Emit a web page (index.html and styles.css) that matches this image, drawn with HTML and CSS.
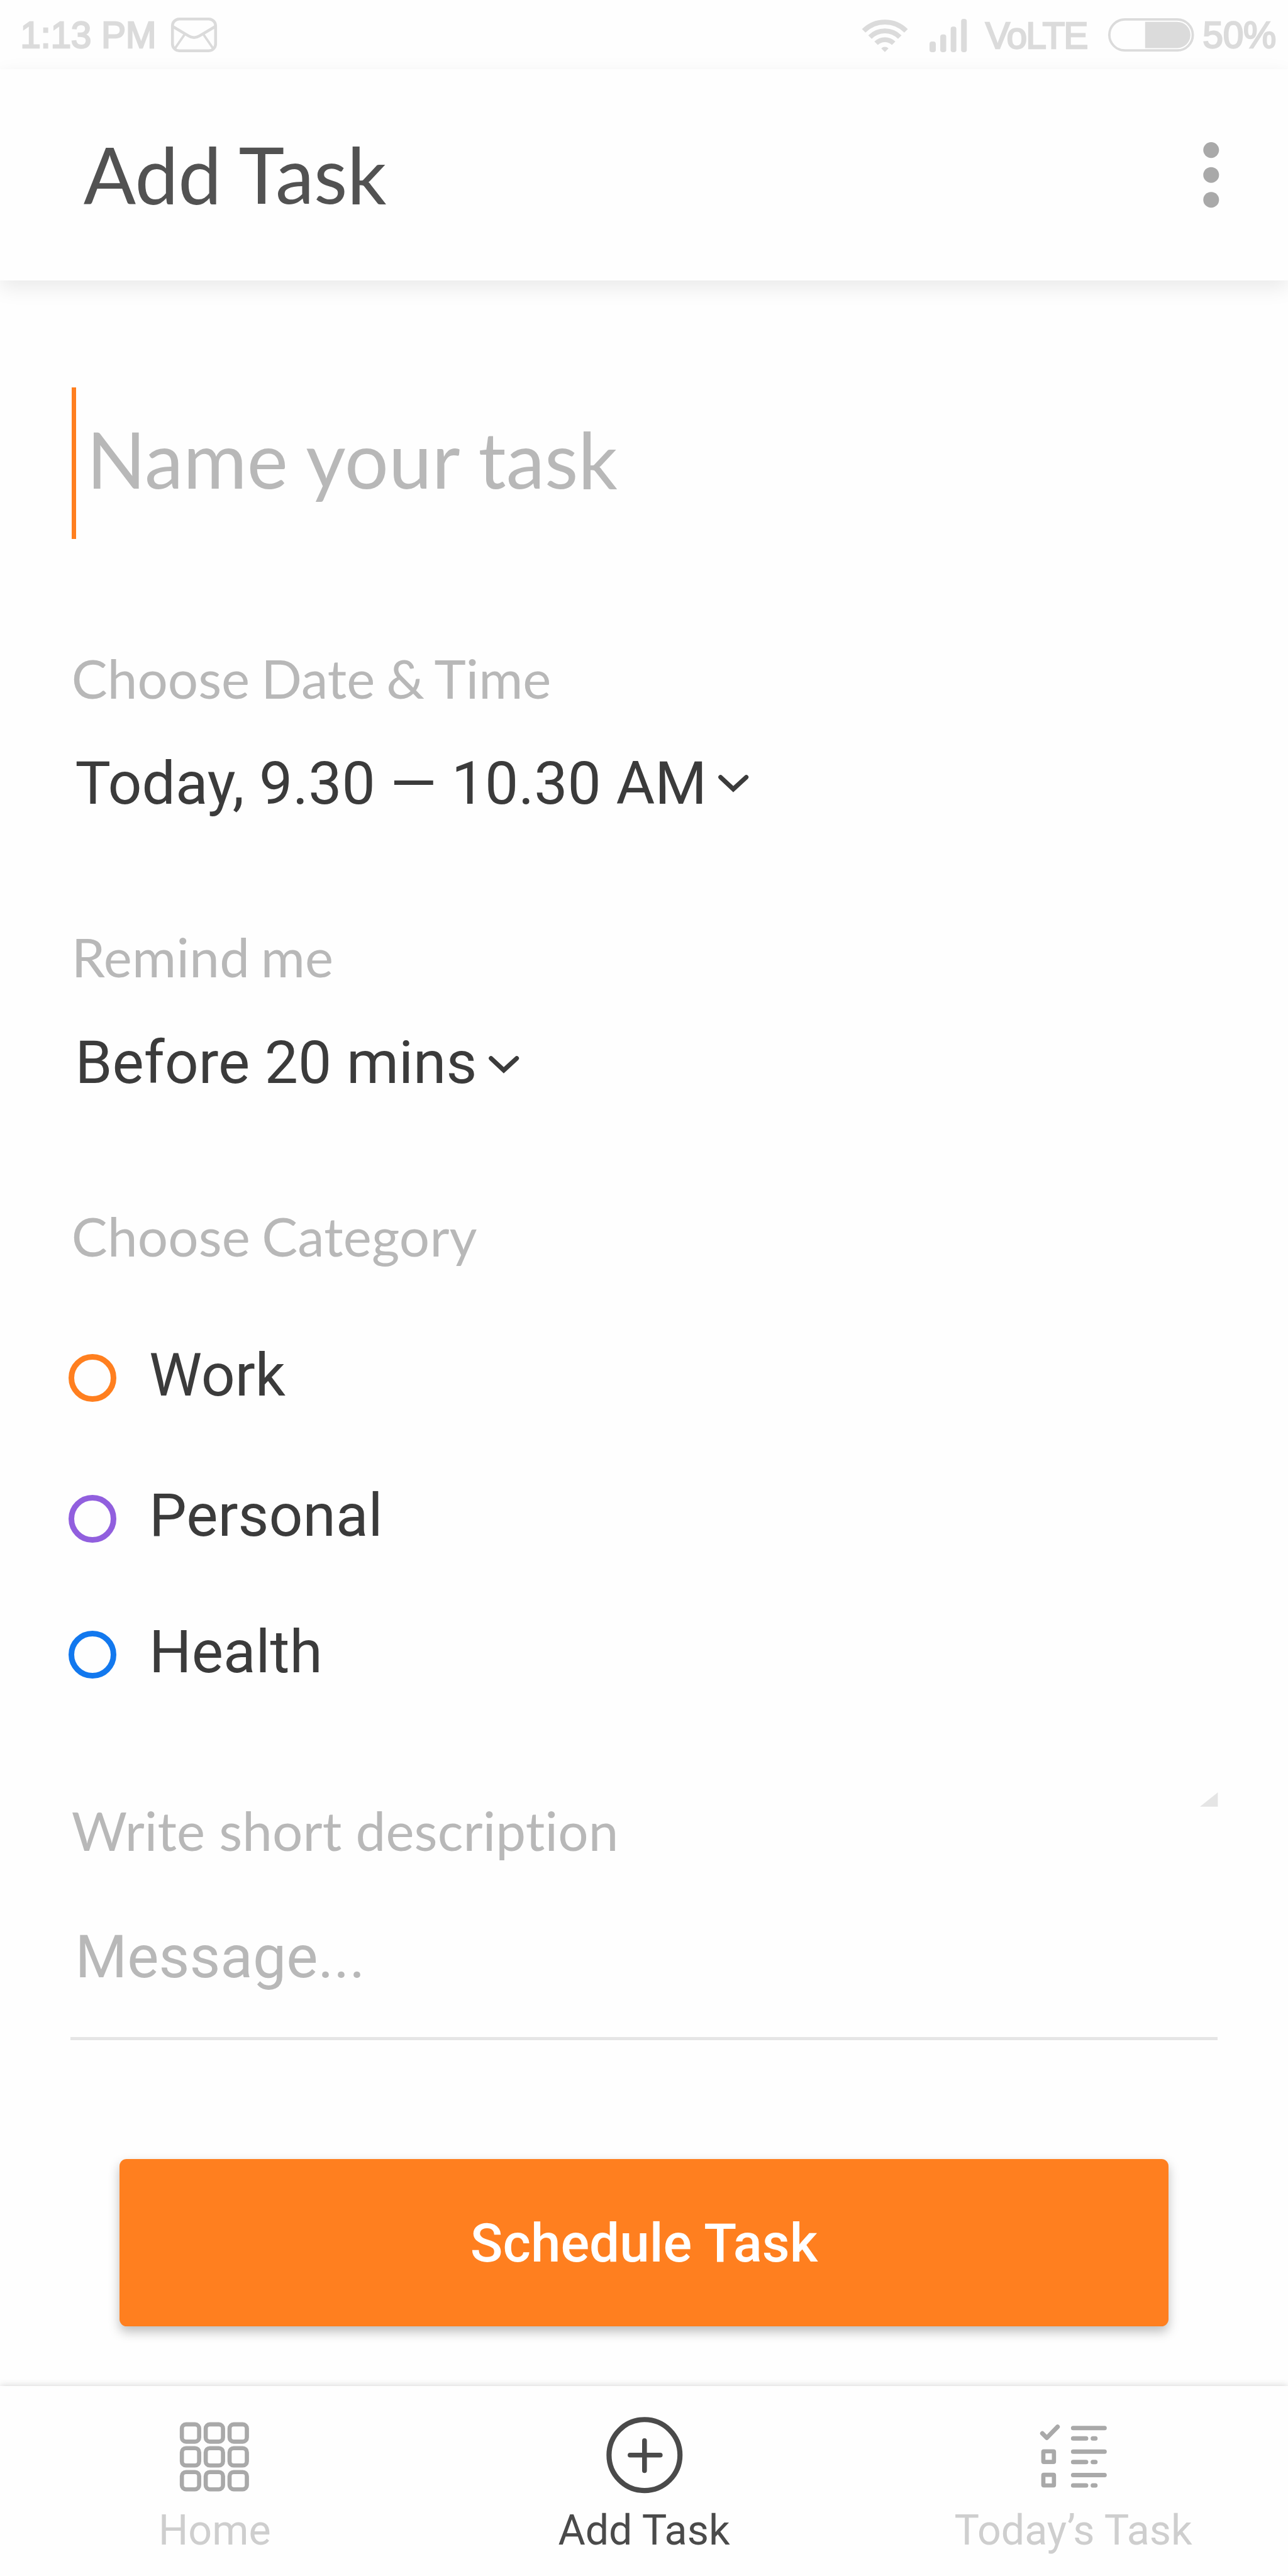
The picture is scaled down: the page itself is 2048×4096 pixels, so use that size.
FILE: index.html
```
<!DOCTYPE html>
<html lang="en">
<head>
<meta charset="utf-8">
<title>Add Task</title>
<link rel="stylesheet" href="styles.css">
</head>
<body>
<div class="screen">
  <div class="status">
    <div class="status-left">
      <span class="status-text clock">1:13 PM</span>
      <svg class="mail" viewBox="0 0 77 58" fill="none" stroke="currentColor">
        <rect x="2.3" y="2.4" width="72.4" height="53.2" rx="11.5" stroke-width="4.8"/>
        <path d="M3 15 29 30.5Q38.5 36.5 48 30.5L74 15" stroke-width="4.8"/>
        <path d="M22.5 28.5 6 52.5M54.5 28.5 71 52.5" stroke-width="4"/>
      </svg>
    </div>
    <div class="status-right">
      <svg class="wifi" viewBox="0 0 76 55" fill="none" stroke="currentColor" stroke-width="8.2">
        <path d="M2.5 19.1A50.2 50.2 0 0 1 73.5 19.1"/>
        <path d="M13 29.6A35.3 35.3 0 0 1 63 29.6"/>
        <path d="M23.3 39.9A20.8 20.8 0 0 1 52.7 39.9"/>
        <path d="M31.9 48.5A8.6 8.6 0 0 1 44.1 48.5L38 54.6Z" fill="currentColor" stroke="none"/>
      </svg>
      <svg class="signal" viewBox="0 0 63 56" fill="currentColor">
        <rect x="0" y="38" width="10.5" height="18" rx="4"/>
        <rect x="18" y="26" width="10" height="30" rx="4"/>
        <rect x="35.5" y="13" width="9.5" height="43" rx="4"/>
        <rect x="53" y="0" width="9.5" height="56" rx="4"/>
      </svg>
      <span class="status-text volte">VoLTE</span>
      <svg class="battery" viewBox="0 0 144 56">
        <rect x="2" y="2" width="140" height="52" rx="26" fill="none" stroke="currentColor" stroke-width="4"/>
        <path d="M62 6H116A22 22 0 0 1 116 50H62Z" fill="currentColor"/>
      </svg>
      <span class="status-text percent">50%</span>
    </div>
  </div>

  <header class="header">
    <h1 class="title">Add Task</h1>
    <svg class="more" viewBox="0 0 27 110" fill="currentColor">
      <circle cx="13.5" cy="13.3" r="13.2"/><circle cx="13.5" cy="55" r="13.2"/><circle cx="13.5" cy="96.7" r="13.2"/>
    </svg>
  </header>

  <main class="form">
    <div class="name-field"><span class="name-text">Name your task</span></div>

    <section class="field field-date">
      <div class="label label-date">Choose Date &amp; Time</div>
      <div class="value">Today, 9.30 — 10.30 AM
        <svg class="chevron" viewBox="0 0 51 30" fill="none" stroke="currentColor" stroke-width="7.6" stroke-linecap="round"><path d="M4 4 25.3 24 47 4"/></svg>
      </div>
    </section>

    <section class="field">
      <div class="label label-remind">Remind me</div>
      <div class="value">Before 20 mins
        <svg class="chevron chevron-low" viewBox="0 0 51 30" fill="none" stroke="currentColor" stroke-width="7.6" stroke-linecap="round"><path d="M4 4 25.3 24 47 4"/></svg>
      </div>
    </section>

    <section class="categories">
      <div class="label label-category">Choose Category</div>
      <div class="category work"><span class="ring"></span><span class="category-name">Work</span></div>
      <div class="category personal"><span class="ring"></span><span class="category-name">Personal</span></div>
      <div class="category health"><span class="ring"></span><span class="category-name">Health</span></div>
    </section>

    <section class="description">
      <div class="label label-description">Write short description</div>
      <div class="message">Message...</div>
      <svg class="resizer" viewBox="0 0 30 24"><path d="M30 0V24H0Z" fill="#e5e5e5"/></svg>
    </section>

    <div class="submit">Schedule Task</div>
  </main>

  <nav class="tabs">
    <div class="tab">
      <svg class="tab-icon" viewBox="0 0 160 128" fill="none" stroke="currentColor" stroke-width="7">
        <rect x="25.5" y="12.5" width="29" height="29" rx="7"/><rect x="65.5" y="12.5" width="29" height="29" rx="7"/><rect x="105.5" y="12.5" width="29" height="29" rx="7"/>
        <rect x="25.5" y="52.5" width="29" height="29" rx="7"/><rect x="65.5" y="52.5" width="29" height="29" rx="7"/><rect x="105.5" y="52.5" width="29" height="29" rx="7"/>
        <rect x="25.5" y="92.5" width="29" height="29" rx="7"/><rect x="65.5" y="92.5" width="29" height="29" rx="7"/><rect x="105.5" y="92.5" width="29" height="29" rx="7"/>
      </svg>
      <span class="tab-label">Home</span>
    </div>
    <div class="tab active">
      <svg class="tab-icon" viewBox="0 0 160 128" fill="none" stroke="currentColor">
        <circle cx="81" cy="64" r="59.5" stroke-width="8.6"/>
        <path d="M56.8 64H107.4M81 39.8V90.2" stroke-width="8" stroke-linecap="round"/>
      </svg>
      <span class="tab-label">Add Task</span>
    </div>
    <div class="tab">
      <svg class="tab-icon" viewBox="0 0 160 128" fill="none" stroke="currentColor" stroke-width="7.4" stroke-linecap="round" stroke-linejoin="round">
        <path d="M27.8 27.6 35.3 35.2 53.4 16.6"/>
        <rect x="29.5" y="57.8" width="17.8" height="17.8" rx="0.8" stroke-width="7"/>
        <rect x="29.5" y="97.2" width="17.8" height="17.8" rx="0.8" stroke-width="7"/>
        <path d="M79.5 18.8H132.2M79.5 36.2H101.2M112.5 36.2H116.8"/>
        <path d="M79.5 58.2H132.2M79.5 75.6H101.2M112.5 75.6H116.8"/>
        <path d="M79.5 97.6H132.2M79.5 115H101.2M112.5 115H116.8"/>
      </svg>
      <span class="tab-label">Today’s Task</span>
    </div>
  </nav>
</div>
</body>
</html>
```
FILE: styles.css
```
/* 1rem is 100 design pixels on a 2160px wide artboard */
html { font-size: calc(100vw / 21.6); }
* { box-sizing: border-box; }
body { margin: 0; background: #fefefe; font-family: Roboto, sans-serif; color: #3b3b3b; }
svg { display: block; flex: none; overflow: visible; }
.screen { display: flex; flex-direction: column; width: 21.6rem; height: 43.2rem; overflow: hidden; }

.status { display: flex; justify-content: space-between; align-items: center; height: 1.16rem; padding: 0.01rem 0.2rem 0 0.34rem; color: #dbdbdb; }
.status-left, .status-right { display: flex; align-items: center; }
.status-text { font: 0.62rem/0.8rem "Liberation Sans", Arial, sans-serif; white-space: nowrap; -webkit-text-stroke: 0.024rem currentColor; }
.clock { letter-spacing: -0.004rem; }
.mail { width: 0.77rem; height: 0.58rem; margin-left: 0.25rem; }
.wifi { width: 0.76rem; height: 0.55rem; margin: 0.03rem 0.36rem 0 0; }
.signal { width: 0.63rem; height: 0.56rem; margin: 0.03rem 0.31rem 0 0; }
.volte { letter-spacing: -0.022rem; padding-top: 0.04rem; }
.battery { width: 1.44rem; height: 0.56rem; margin: 0 0.15rem 0 0.35rem; }
.percent { letter-spacing: -0.003rem; }

.header { position: relative; display: flex; justify-content: space-between; align-items: center; height: 3.54rem; padding: 0 1.155rem 0 1.4rem; background: #fefefe; box-shadow: 0 0.12rem 0.33rem rgba(0, 0, 0, 0.085); }
.title { margin: 0 0 0.026rem; font: 400 1.3rem/1.6rem Lato, sans-serif; letter-spacing: -0.003rem; color: #525252; }
.more { width: 0.27rem; height: 1.1rem; color: #a9a9a9; }

.form { flex: 1; display: flex; flex-direction: column; padding: 1.8rem 1.18rem 0; }
.name-field { display: flex; align-items: center; height: 2.54rem; margin-left: 0.02rem; padding: 0 0 0.146rem 0.18rem; border-left: 0.08rem solid #ff7f1f; }
.name-text { font: 1.3rem/1.6rem Lato, sans-serif; color: #b8b8b8; }
.label { margin-left: 0.02rem; font: 0.9rem/1.08rem Lato, sans-serif; font-variant-ligatures: none; color: #b8b8b8; }
.label-date { word-spacing: -0.04rem; }
.label-remind { letter-spacing: 0.003rem; word-spacing: -0.05rem; }
.label-category { letter-spacing: 0.0015rem; word-spacing: -0.04rem; }
.label-description { letter-spacing: 0.0015rem; }
.field { margin-top: 1.773rem; }
.field-date { margin-top: 1.787rem; }
.value { display: flex; align-items: center; gap: 0.195rem; height: 1.2rem; margin: 0.627rem 0 0 0.08rem; padding-top: 0.02rem; font-size: 1rem; line-height: 1.2rem; }
.chevron { width: 0.51rem; height: 0.3rem; }
.chevron-low { margin-top: 0.08rem; }

.categories { margin-top: 1.773rem; }
.category { display: flex; align-items: center; height: 0.8rem; margin-left: -0.03rem; }
.ring { width: 0.8rem; height: 0.8rem; border: 0.1rem solid; border-radius: 50%; }
.category-name { margin: 0 0 0.1rem 0.55rem; font-size: 1rem; line-height: 0.9rem; }
.work { margin-top: 1.443rem; }
.work .ring { border-color: #ff7f1f; }
.personal { margin-top: 1.56rem; }
.personal .ring { border-color: #915fde; }
.health { margin-top: 1.48rem; }
.health .ring { border-color: #1278ee; }

.description { position: relative; margin-top: 2.002rem; border-bottom: 0.06rem solid #e5e5e5; }
.message { margin: 0.993rem 0 0.735rem 0.08rem; font-size: 1rem; line-height: 1.2rem; color: #b8b8b8; }
.resizer { position: absolute; right: 0; top: -0.09rem; width: 0.3rem; height: 0.24rem; }

.submit { height: 2.8rem; margin: 2rem 0.82rem 0; padding-top: 0.02rem; border-radius: 0.12rem; background: #ff7f1f; box-shadow: 0 0.09rem 0.18rem rgba(0, 0, 0, 0.25); color: #fff; font-size: 0.9rem; font-weight: 500; line-height: 2.8rem; text-align: center; }

.tabs { position: relative; display: grid; grid-template-columns: repeat(3, 1fr); height: 3.18rem; padding-top: 0.51rem; background: #fefefe; box-shadow: 0 0 0.12rem rgba(0, 0, 0, 0.18); }
.tab { display: flex; flex-direction: column; align-items: center; gap: 0.208rem; color: #a9a9a9; }
.tab-icon { width: 1.6rem; height: 1.28rem; }
.tab-label { font-size: 0.7rem; line-height: 0.84rem; color: #cecece; }
.active, .active .tab-label { color: #4a4a4a; }
```
